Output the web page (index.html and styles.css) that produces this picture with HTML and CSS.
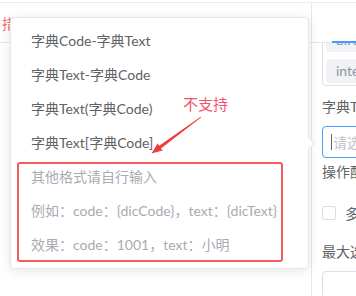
FILE: index.html
```html
<!DOCTYPE html>
<html lang="zh">
<head>
<meta charset="utf-8">
<link rel="stylesheet" href="styles.css">
</head>
<body>
<div class="page">
  <div class="main">
    <div class="left">
      <div class="left-head"><span class="red-label">措施名称</span></div>
    </div>
    <div class="right">
      <div class="tabs"><span class="tab-bar"></span></div>
      <div class="right-body">
        <div class="tag-box">
          <div class="tag">birthday</div>
          <div class="tag">integer</div>
        </div>
        <div class="label">字典Text格式</div>
        <div class="input focus"><span class="caret"></span><span class="ph">请选择</span></div>
        <div class="label">操作配置</div>
        <div class="check-row"><span class="checkbox"></span><span class="check-text">多选</span></div>
        <div class="label">最大选择数</div>
        <div class="input"></div>
      </div>
    </div>
  </div>

  <div class="dropdown">
    <ul class="menu">
      <li class="item">字典Code-字典Text</li>
      <li class="item">字典Text-字典Code</li>
      <li class="item">字典Text(字典Code)</li>
      <li class="item">字典Text[字典Code]</li>
      <li class="item disabled">其他格式请自行输入</li>
      <li class="item disabled">例如：code：{dicCode}，text：{dicText}</li>
      <li class="item disabled">效果：code：1001，text：小明</li>
    </ul>
    <div class="mark-box"></div>
    <span class="popper-arrow"></span>
  </div>

  <span class="note">不支持</span>
  <svg class="note-arrow" viewBox="140 105 70 55" width="70" height="55">
    <polygon fill="#f23a3a" points="201.3,117.3 160.9,148.4 162.6,150.5 151.5,153.5 157.6,143.6 159.2,145.8 200.7,116.7"/>
  </svg>
</div>
</body>
</html>
```
FILE: styles.css
```css
* { box-sizing: border-box; }
html, body { margin: 0; padding: 0; background: #fff; }
body {
  font-family: "Lato", "Noto Sans CJK SC", sans-serif;
  font-size: 14px;
  color: #606266;
}
.page {
  position: relative;
  width: 356px;
  height: 296px;
  overflow: hidden;
  padding-top: 2px;
}
.main {
  display: flex;
  height: 294px;
  border-top: 1px solid #ebeef5;
}
.left { width: 311px; flex: none; }
.left-head {
  height: 40px;
  border-bottom: 1px solid #e4e7ed;
  padding: 11px 0 0 2px;
}
.red-label { color: #f56c6c; line-height: 20px; white-space: nowrap; }

.right {
  flex: 1;
  border-left: 1px solid #e4e7ed;
  min-width: 0;
}
.tabs {
  height: 40px;
  border-bottom: 1px solid #e4e7ed;
  display: flex;
  align-items: flex-end;
}
.tab-bar {
  display: block;
  width: 40px;
  height: 2px;
  margin-left: 20px;
  margin-bottom: -1px;
  background: #409eff;
}
.right-body {
  overflow: hidden;
  padding-left: 10px;
  height: 252px;
}
.tag-box {
  margin-top: -19px;
  width: 80px;
  border: 1px solid #dcdfe6;
  border-radius: 4px;
  padding: 3px 3px 2px;
  display: flex;
  flex-direction: column;
  gap: 7px;
}
.tag {
  height: 24px;
  line-height: 24px;
  background: #f0f2f5;
  border-radius: 4px;
  padding-left: 10px;
  color: #909399;
  white-space: nowrap;
  overflow: hidden;
}
.label {
  line-height: 20px;
  white-space: nowrap;
  color: #606266;
}
.tag-box + .label { margin-top: 11px; }
.input {
  height: 32px;
  width: 120px;
  border: 1px solid #dcdfe6;
  border-radius: 4px;
  margin-top: 9px;
  display: flex;
  align-items: center;
  padding-left: 8px;
  white-space: nowrap;
}
.input.focus { border-color: #409eff; }
.caret { width: 1px; height: 16px; background: #606266; margin-right: 1px; }
.ph { color: #c0c4cc; }
.input + .label { margin-top: 4px; }
.check-row {
  margin-top: 21px;
  display: flex;
  align-items: center;
  height: 20px;
  white-space: nowrap;
}
.checkbox {
  width: 14px;
  height: 14px;
  border: 1px solid #dcdfe6;
  border-radius: 2px;
  margin-right: 9px;
  flex: none;
}
.check-row + .label { margin-top: 19px; }

.dropdown {
  position: absolute;
  left: 10px;
  top: 17px;
  width: 299px;
  background: #fff;
  border: 1px solid #e4e7ed;
  border-radius: 4px;
  box-shadow: 0 2px 12px 0 rgba(0, 0, 0, 0.1);
}
.menu {
  list-style: none;
  margin: 0;
  padding: 6px 0;
}
.item {
  height: 34px;
  line-height: 34px;
  padding: 0 20px;
  white-space: nowrap;
  color: #606266;
}
.item.disabled { color: #a8abb2; }
.mark-box {
  position: absolute;
  left: 6px;
  top: 144px;
  width: 266px;
  height: 100px;
  border: 2px solid #f45c5c;
  border-radius: 3px;
}
.popper-arrow {
  position: absolute;
  right: -5px;
  top: 121px;
  width: 9px;
  height: 9px;
  background: #fff;
  border-top: 1px solid #e4e7ed;
  border-right: 1px solid #e4e7ed;
  transform: rotate(45deg);
}
.note {
  position: absolute;
  left: 183px;
  top: 94px;
  font-size: 15px;
  line-height: 20px;
  color: #f2556a;
}
.note-arrow {
  position: absolute;
  left: 140px;
  top: 105px;
}
```
